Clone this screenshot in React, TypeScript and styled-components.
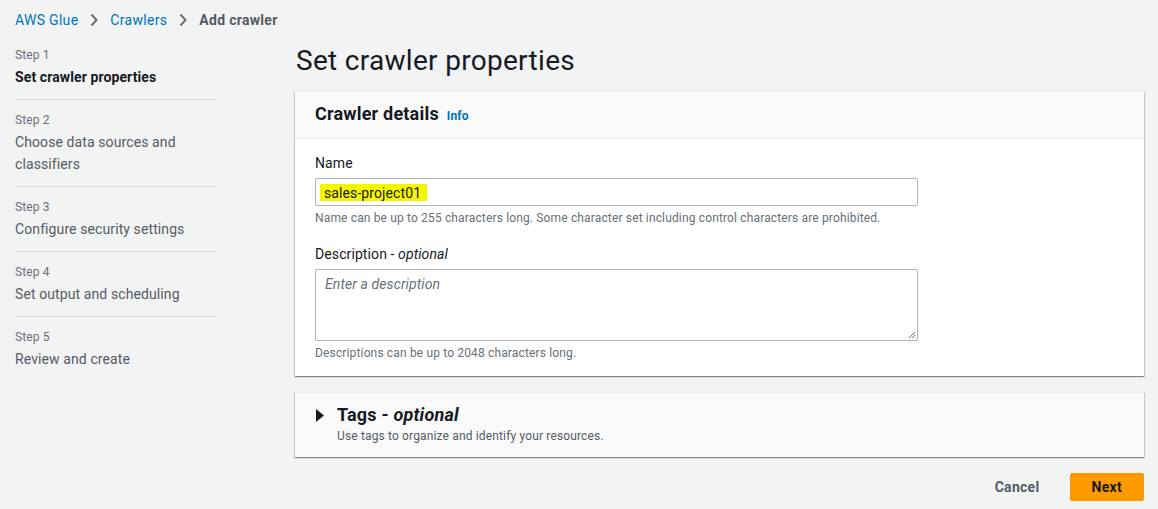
import React from 'react';
import styled, { createGlobalStyle } from 'styled-components';

const GlobalStyle = createGlobalStyle`
  html, body {
    margin: 0;
    padding: 0;
    background: #f2f3f3;
    font-family: Roboto, "Liberation Sans", sans-serif;
    letter-spacing: 0.1px;
    color: #16191f;
  }
  * { box-sizing: border-box; }
`;

const Page = styled.div`
  width: 1158px;
  height: 509px;
  overflow: hidden;
  padding: 10px 14px 0 15px;
`;

const Breadcrumbs = styled.nav`
  display: flex;
  align-items: center;
  gap: 11px;
  height: 20px;
  font-size: 14px;
  letter-spacing: 0.3px;
`;

const Crumb = styled.span<{ $current?: boolean }>`
  color: ${(p) => (p.$current ? '#545b64' : '#0073bb')};
  font-weight: ${(p) => (p.$current ? 700 : 400)};
`;

const Chevron = () => (
  <svg width="10" height="14" viewBox="0 0 10 14">
    <path d="M2.5 1.5 L7.5 7 L2.5 12.5" fill="none" stroke="#687078" strokeWidth="2" />
  </svg>
);

const Layout = styled.div`
  display: grid;
  grid-template-columns: 200px 1fr;
  column-gap: 80px;
  margin-top: 13px;
`;

const StepList = styled.ol`
  list-style: none;
  margin: 0;
  padding: 3px 0 0;
`;

const StepItem = styled.li`
  padding: 11px 0 11px;
  border-bottom: 1px solid #d5dbdb;

  &:first-child {
    padding-top: 0;
  }
  &:last-child {
    border-bottom: none;
  }
`;

const StepLabel = styled.div`
  font-size: 12px;
  line-height: 18px;
  color: #687078;
  margin-bottom: 2px;
`;

const StepTitle = styled.div<{ $active?: boolean }>`
  font-size: 14px;
  line-height: 22px;
  color: ${(p) => (p.$active ? '#16191f' : '#545b64')};
  font-weight: ${(p) => (p.$active ? 700 : 400)};
`;

const Main = styled.main`
  display: flex;
  flex-direction: column;
`;

const PageTitle = styled.h1`
  margin: 0 0 12px 1px;
  font-size: 28px;
  line-height: 36px;
  font-weight: 400;
  letter-spacing: 0.3px;
  color: #16191f;
`;

const Card = styled.section`
  background: #fff;
  border-top: 1px solid #eaeded;
  box-shadow: 0 1px 1px 0 rgba(0, 28, 36, 0.3), 1px 1px 1px 0 rgba(0, 28, 36, 0.15),
    -1px 1px 1px 0 rgba(0, 28, 36, 0.15);
`;

const CardHeader = styled.header`
  display: flex;
  align-items: baseline;
  gap: 8px;
  background: #fafafa;
  border-bottom: 1px solid #eaeded;
  padding: 10px 20px 12px;
`;

const CardTitle = styled.h2`
  margin: 0;
  font-size: 18px;
  line-height: 24px;
  font-weight: 700;
  letter-spacing: 0.2px;
  color: #16191f;
`;

const InfoLink = styled.a`
  font-size: 12px;
  font-weight: 700;
  color: #0073bb;
`;

const CardBody = styled.div`
  padding: 13px 20px 15px;
  display: flex;
  flex-direction: column;
  gap: 17px;
`;

const Field = styled.div`
  display: flex;
  flex-direction: column;
  width: 603px;
`;

const Label = styled.label`
  font-size: 14px;
  line-height: 22px;
  color: #16191f;
  margin-bottom: 4px;

  em {
    font-style: italic;
  }
`;

const InputBox = styled.div`
  height: 28px;
  border: 1px solid #aab7b8;
  border-radius: 2px;
  background: #fff;
  display: flex;
  align-items: center;
  padding: 0 4px;
  font-size: 14px;
`;

const Highlight = styled.span`
  background: #f6f600;
  padding: 2px 6px 1px 4px;
  line-height: 14px;
  color: #16191f;
`;

const TextArea = styled.div`
  height: 72px;
  border: 1px solid #aab7b8;
  border-radius: 2px;
  background: #fff;
  padding: 4px 9px;
  font-size: 14px;
  line-height: 20px;
  font-style: italic;
  color: #687078;
  position: relative;
`;

const Grip = styled.svg`
  position: absolute;
  right: 1px;
  bottom: 1px;
`;

const Hint = styled.div`
  font-size: 12px;
  line-height: 16px;
  letter-spacing: 0.15px;
  color: #687078;
  margin-top: 4px;
`;

const ExpandCard = styled(Card)`
  background: #fafafa;
  margin-top: 16px;
  padding: 10px 20px 13px 21px;
  display: flex;
  gap: 13px;
`;

const Caret = styled.svg`
  margin-top: 6px;
  flex-shrink: 0;
`;

const ExpandText = styled.div`
  display: flex;
  flex-direction: column;

  ${CardTitle} em {
    font-weight: 700;
  }
`;

const Sub = styled.div`
  font-size: 12px;
  line-height: 16px;
  letter-spacing: 0.15px;
  color: #545b64;
  margin-top: 1px;
`;

const Actions = styled.div`
  display: flex;
  justify-content: flex-end;
  align-items: center;
  gap: 8px;
  margin-top: 16px;
`;

const Button = styled.button<{ $primary?: boolean }>`
  font-family: inherit;
  font-size: 14px;
  font-weight: 700;
  letter-spacing: 0.3px;
  height: 28px;
  padding: 0 21px;
  border-radius: 2px;
  border: 1px solid transparent;
  background: ${(p) => (p.$primary ? '#ff9900' : 'transparent')};
  color: ${(p) => (p.$primary ? '#16191f' : '#545b64')};
  border-color: ${(p) => (p.$primary ? '#ff9900' : 'transparent')};
`;

const steps = [
  'Set crawler properties',
  'Choose data sources and classifiers',
  'Configure security settings',
  'Set output and scheduling',
  'Review and create',
];

export default function App() {
  return (
    <>
      <GlobalStyle />
      <Page>
        <Breadcrumbs>
          <Crumb>AWS Glue</Crumb>
          <Chevron />
          <Crumb>Crawlers</Crumb>
          <Chevron />
          <Crumb $current>Add crawler</Crumb>
        </Breadcrumbs>
        <Layout>
          <StepList>
            {steps.map((s, i) => (
              <StepItem key={s}>
                <StepLabel>Step {i + 1}</StepLabel>
                <StepTitle $active={i === 0}>{s}</StepTitle>
              </StepItem>
            ))}
          </StepList>
          <Main>
            <PageTitle>Set crawler properties</PageTitle>
            <Card>
              <CardHeader>
                <CardTitle>Crawler details</CardTitle>
                <InfoLink>Info</InfoLink>
              </CardHeader>
              <CardBody>
                <Field>
                  <Label>Name</Label>
                  <InputBox>
                    <Highlight>sales-project01</Highlight>
                  </InputBox>
                  <Hint>
                    Name can be up to 255 characters long. Some character set including control
                    characters are prohibited.
                  </Hint>
                </Field>
                <Field>
                  <Label>
                    Description - <em>optional</em>
                  </Label>
                  <TextArea>
                    Enter a description
                    <Grip width="10" height="10" viewBox="0 0 10 10">
                      <path d="M9 3 L3 9 M9 6 L6 9" stroke="#687078" strokeWidth="1" />
                    </Grip>
                  </TextArea>
                  <Hint>Descriptions can be up to 2048 characters long.</Hint>
                </Field>
              </CardBody>
            </Card>
            <ExpandCard>
              <Caret width="8" height="13" viewBox="0 0 8 13">
                <path d="M0 0 L8 6.5 L0 13 Z" fill="#16191f" />
              </Caret>
              <ExpandText>
                <CardTitle>
                  Tags - <em>optional</em>
                </CardTitle>
                <Sub>Use tags to organize and identify your resources.</Sub>
              </ExpandText>
            </ExpandCard>
            <Actions>
              <Button>Cancel</Button>
              <Button $primary>Next</Button>
            </Actions>
          </Main>
        </Layout>
      </Page>
    </>
  );
}
